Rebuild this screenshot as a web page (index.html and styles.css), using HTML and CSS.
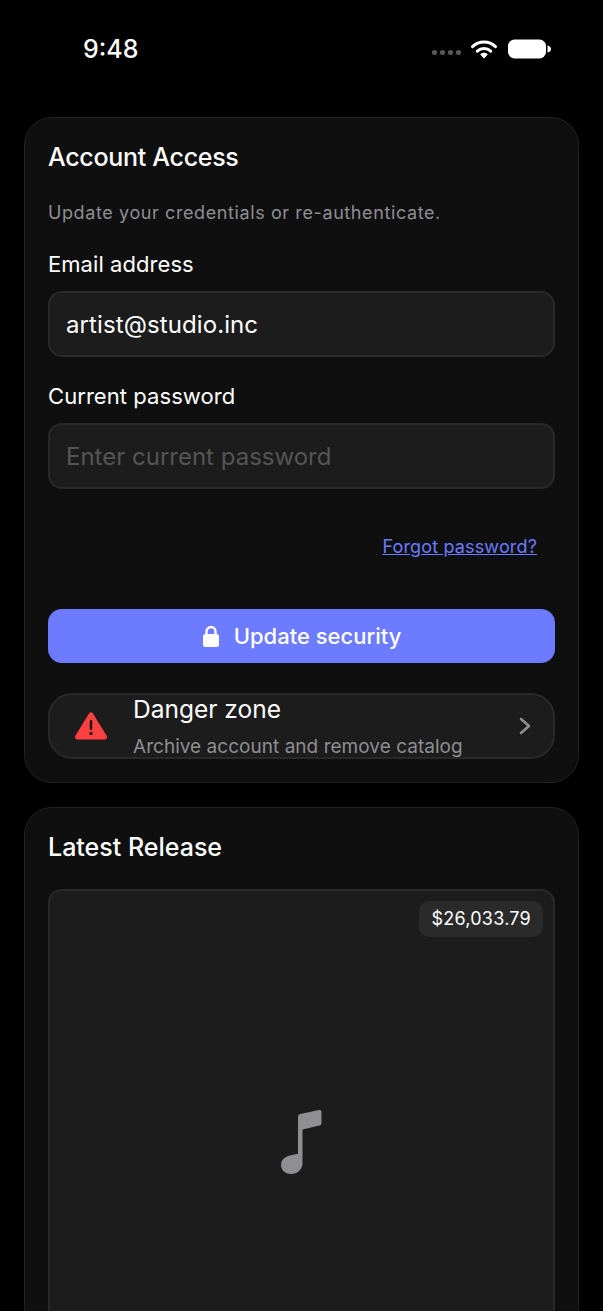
FILE: index.html
```html
<!DOCTYPE html>
<html lang="en">
<head>
<meta charset="utf-8">
<title>Account</title>
<link rel="stylesheet" href="styles.css">
</head>
<body>
<div class="screen">
  <header class="status">
    <span class="time">9:48</span>
    <div class="status-icons">
      <span class="signal"><i></i><i></i><i></i><i></i></span>
      <svg class="wifi" width="28" height="20" viewBox="0 0 28 20"><path d="M2.5 7.6A16.500 16.500 0 0 1 25.500 7.600" fill="none" stroke="#fff" stroke-width="3" stroke-linecap="round"/><path d="M7.300 12.200A9.700 9.700 0 0 1 20.700 12.200" fill="none" stroke="#fff" stroke-width="3" stroke-linecap="round"/><path d="M10.600 15.300Q14 12.500 17.400 15.300L14 19.200Z" fill="#fff" stroke="#fff" stroke-width=".8" stroke-linejoin="round"/></svg>
      <svg class="battery" width="44" height="20" viewBox="0 0 44 20"><rect x="0" y="0.500" width="38" height="19" rx="6.500" fill="#fff"/><path d="M39.500 6.500Q43 7.500 43 10T39.500 13.500Z" fill="#fff"/></svg>
    </div>
  </header>

  <section class="card">
    <h2 class="card-title card-title-tight">Account Access</h2>
    <p class="subtitle">Update your credentials or re-authenticate.</p>
    <label class="label">Email address</label>
    <div class="input">artist@studio.inc</div>
    <label class="label label-second">Current password</label>
    <div class="input placeholder">Enter current password</div>
    <div class="forgot-row"><a class="forgot" href="#">Forgot password?</a></div>
    <button class="primary" type="button">
      <svg width="18" height="22" viewBox="0 0 18 22"><path d="M4.500 10V6.500a4.500 4.500 0 0 1 9 0V10" fill="none" stroke="#fff" stroke-width="2.400"/><rect x="1" y="9" width="16" height="13" rx="2.500" fill="#fff"/></svg>
      <span>Update security</span>
    </button>
    <div class="danger">
      <svg class="warn" width="32" height="28" viewBox="0 0 32 28"><path d="M16 3L29.500 25H2.500Z" fill="#ff4040" stroke="#ff4040" stroke-width="5" stroke-linejoin="round"/><rect x="14.700" y="8" width="2.600" height="10" rx="1.300" fill="#1c1c1c"/><circle cx="16" cy="21.500" r="1.700" fill="#1c1c1c"/></svg>
      <div class="danger-text">
        <div class="danger-title">Danger zone</div>
        <div class="danger-sub">Archive account and remove catalog</div>
      </div>
      <svg class="chev" width="12" height="18" viewBox="0 0 12 18"><path d="M2 2l8 7-8 7" fill="none" stroke="#8e8e93" stroke-width="2.600" stroke-linecap="round" stroke-linejoin="round"/></svg>
    </div>
  </section>

  <section class="card card-release">
    <h2 class="card-title">Latest Release</h2>
    <div class="art">
      <span class="price">$26,033.79</span>
      <svg class="note" width="41" height="66" viewBox="0 0 41 66"><path d="M17 7.500Q17 5.300 19.300 4.900L38 1.100Q40.500.7 40.500 3.200V14Q40.500 16.200 38.500 16.600L21.500 20.500V54C21.500 60.500 16.500 65 10 65C4.300 65 0 61 0 56C0 50.500 4.300 47.500 10 46.300L17 44.800Z" fill="#8e8e93"/></svg>
    </div>
  </section>
</div>
</body>
</html>
```

FILE: styles.css
```css
* { box-sizing: border-box; }
html, body { margin: 0; padding: 0; height: 100%; background: #000; overflow: hidden; }
body { font-family: Inter, "Liberation Sans", sans-serif; color: #fff; }
.screen { height: 1311px; overflow: hidden; padding: 0 24px; }

.status { height: 117px; display: flex; justify-content: space-between; align-items: flex-start; padding: 32px 27px 0 59px; }
.time { font-size: 25px; font-weight: 500; line-height: 34px; }
.status-icons { display: flex; align-items: center; gap: 9px; padding-top: 7px; }
.signal { display: flex; gap: 3px; padding-top: 7px; }
.signal i { width: 5px; height: 5px; border-radius: 50%; background: #5a5a5a; }
.wifi, .battery { display: block; }
.battery { margin-left: 1px; }

.card { background: #0f0f0f; border: 1px solid #222; border-radius: 28px; padding: 23px; margin-bottom: 24px; }
.card-title { margin: 0; font-size: 25px; line-height: 32px; font-weight: 500; }
.card-title-tight { letter-spacing: -0.3px; }
.subtitle { margin: 28px 0 0; font-size: 18px; line-height: 24px; color: #8e8e93; letter-spacing: 0.6px; }
.label { display: block; margin-top: 25px; font-size: 22px; line-height: 28px; font-weight: 400; letter-spacing: 0.06px; }
.label-second { margin-top: 25px; }
.input { margin-top: 13px; height: 66px; background: #1c1c1c; border: 2px solid #292929; border-radius: 14px; padding: 0 16px; display: flex; align-items: center; font-size: 24px; letter-spacing: 0.1px; }
.placeholder { color: #555; letter-spacing: 0; }
.forgot-row { display: flex; justify-content: flex-end; padding: 44px 18px 0 0; height: 120px; }
.forgot { font-size: 18px; line-height: 28px; color: #6c7bff; font-weight: 400; letter-spacing: 0.15px; text-decoration: underline; }
.primary { width: 100%; height: 54px; border: 0; border-radius: 14px; background: #6c7bff; color: #fff; font-family: inherit; font-size: 22px; font-weight: 500; display: flex; align-items: center; justify-content: center; gap: 14px; }
.danger { margin-top: 30px; height: 66px; background: #1c1c1c; border: 2px solid #292929; border-radius: 24px; display: flex; align-items: center; padding: 0 22px 0 25px; overflow: hidden; }
.warn { flex: none; margin-right: 26px; }
.danger-text { flex: 1; min-width: 0; }
.danger-title { font-size: 24.500px; line-height: 32px; font-weight: 400; }
.danger-sub { margin-top: 10px; font-size: 19px; line-height: 24px; color: #8e8e93; letter-spacing: 0.03px; }
.chev { flex: none; }
.card-release { padding-bottom: 40px; }
.art { position: relative; margin-top: 26px; height: 600px; background: #1c1c1c; border: 2px solid #292929; border-radius: 14px; display: flex; justify-content: center; padding-top: 218px; }
.price { position: absolute; top: 10px; right: 10px; height: 36px; padding: 0 12px; border-radius: 10px; background: #2a2a2a; font-size: 18px; line-height: 36px; font-weight: 400; letter-spacing: 0.25px; }
.note { display: block; }
```
